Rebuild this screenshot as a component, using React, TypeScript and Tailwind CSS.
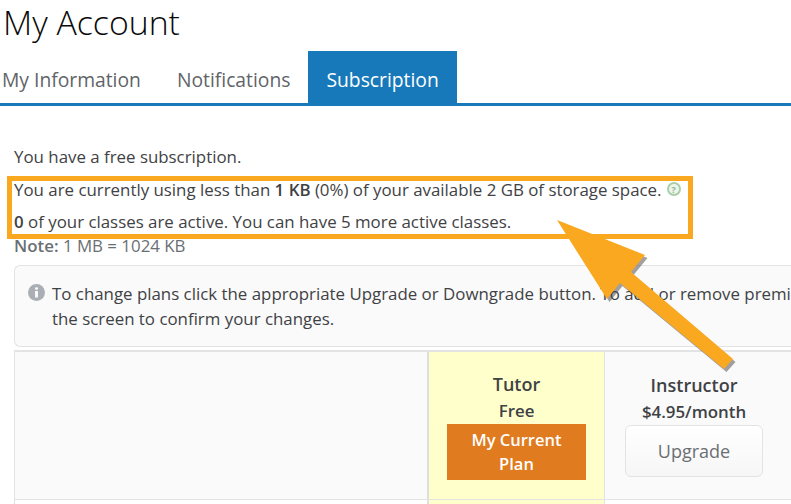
const font = { fontFamily: '"Open Sans", sans-serif' };

export default function App() {
  return (
    <div className="relative h-[504px] w-[791px] overflow-hidden bg-white text-[#3f4245]" style={font}>
      <h1 className="h-[51px] pl-[3px] text-[33.8px] leading-[44px] font-light text-[#0a0a0a]">My Account</h1>

      <div className="flex h-[55px] border-b-[3px] border-[#1779ba] text-[19.3px]">
        <div className="flex h-[52px] items-center pt-[6px] pr-[36px] pl-[2px] text-[#5f6468]">My Information</div>
        <div className="flex h-[52px] items-center pt-[6px] pr-[18px] text-[#5f6468]">Notifications</div>
        <div className="flex h-[52px] items-center bg-[#1779ba] px-[18px] pt-[6px] text-white">Subscription</div>
      </div>

      <div className="pl-[14px] text-[16.875px]">
        <p className="mt-[40px] h-[33px] leading-[21px]">You have a free subscription.</p>
        <p className="flex h-[32px] items-start leading-[21px] whitespace-nowrap">
          <span>
            You are currently using less than <b className="font-semibold">1 KB</b> (0%) of your available 2 GB of storage space.
          </span>
          <span className="mt-[3px] ml-[5px] flex h-[14px] w-[14px] items-center justify-center rounded-full border-2 border-[#a9cfa9] bg-[#eef5ee] text-[9px] leading-none font-bold text-[#8cb88c]">?</span>
        </p>
        <p className="h-[24px] leading-[21px]">
          <b className="font-semibold">0</b> of your classes are active. You can have 5 more active classes.
        </p>
        <p className="h-[30px] leading-[21px] text-[#6b6f73]">
          <b className="font-semibold">Note:</b> 1 MB = 1024 KB
        </p>

        <div className="flex h-[82px] w-[800px] gap-[7px] rounded-l-[6px] border border-r-0 border-[#e3e3e3] bg-[#fafafa] pt-[15px] pl-[13px] leading-[25px] whitespace-nowrap">
          <svg className="mt-[3px] h-[17px] w-[17px] shrink-0" viewBox="0 0 17 17">
            <circle cx="8.5" cy="8.5" r="8.5" fill="#a9afb4" />
            <rect x="7" y="7" width="3" height="6.5" fill="#fafafa" />
            <rect x="7" y="3.2" width="3" height="2.6" rx="1" fill="#fafafa" />
          </svg>
          <div>
            To change plans click the appropriate Upgrade or Downgrade button. To add or remove premium
            <br />
            the screen to confirm your changes.
          </div>
        </div>

        <div className="mt-[3px] flex h-[150px] w-[800px] border-t-2 border-b border-l border-[#e3e3e3] bg-[#fafafa]">
          <div className="w-[414px] border-r-2 border-[#dedede]" />
          <div className="flex w-[176px] flex-col items-center border-r border-[#e3e3e3] bg-[#ffffcc] pt-[19px] text-center">
            <div className="h-[28px] text-[18px] leading-[26px] font-[550]">Tutor</div>
            <div className="h-[25px] leading-[24px] font-[550]">Free</div>
            <div className="flex h-[56px] w-[139px] flex-col items-center justify-center bg-[#e07b1f] text-[16.5px] leading-[24px] font-semibold text-white">
              <span>My Current</span>
              <span>Plan</span>
            </div>
          </div>
          <div className="flex w-[178px] flex-col items-center pt-[20px] text-center">
            <div className="h-[28px] text-[18px] leading-[26px] font-[550]">Instructor</div>
            <div className="h-[24px] leading-[24px] font-[550]">$4.95/month</div>
            <div className="mt-[1px] flex h-[52px] w-[138px] items-center justify-center rounded-[6px] border border-[#e3e3e3] bg-gradient-to-b from-white to-[#f6f6f6] pt-[1px] text-[18px] text-[#6b6f73]">Upgrade</div>
          </div>
        </div>
        <div className="flex h-[6px] w-[800px] bg-white">
          <div className="w-[415px] border-r-2 border-l border-[#dedede]" />
          <div className="w-[176px] border-r border-[#e3e3e3] bg-[#ffffcc]" />
        </div>
      </div>

      {/* Callout annotation over the page */}
      <div className="absolute top-[176px] left-[7px] h-[63px] w-[686px] border-[5px] border-[#f9a81f]" />
      <svg className="absolute top-0 left-0" width="791" height="504" viewBox="0 0 791 504">
        <path d="M557 220 L645 255 L631 272 L733 359 L724 369 L620 283 L607 299 Z" fill="#444" opacity="0.5" transform="translate(2.5 3)" />
        <path d="M557 220 L645 255 L631 272 L733 359 L724 369 L620 283 L607 299 Z" fill="#f9a81f" />
      </svg>
    </div>
  );
}
